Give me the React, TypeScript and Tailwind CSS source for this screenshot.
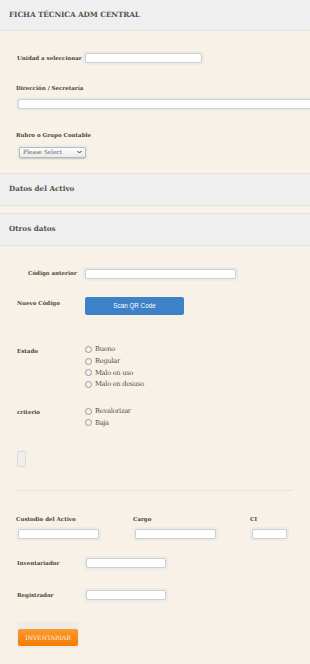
import React from "react";

const serif = "font-['DejaVu_Serif','Liberation_Serif',serif]";
const label = "whitespace-nowrap text-[5.5px] font-bold";

function TextBox({ width }: { width: number }) {
  return (
    <div className="rounded-[3px] bg-[#ecebe7] p-[2px]" style={{ width }}>
      <input
        type="text"
        className="block h-[10px] w-full rounded-[2px] border border-[#cfcfcf] bg-white outline-none"
      />
    </div>
  );
}

function Radio({ label }: { label: string }) {
  return (
    <label className="flex h-[11.7px] items-center gap-[3px]">
      <span className="h-[7px] w-[7px] shrink-0 rounded-full border border-[#9a9a9a] bg-[#f7f1e7]" />
      <span className="whitespace-nowrap text-[6.8px] tracking-[-0.35px] text-[#5b5646]">{label}</span>
    </label>
  );
}

function Band({ title }: { title: string }) {
  return (
    <div className="flex h-[33px] items-center border-y border-[#e6e2da] bg-[#efefef] px-[9px]">
      <span className="text-[7.2px] font-bold text-[#4f544c]">{title}</span>
    </div>
  );
}

export default function App() {
  return (
    <div className={`${serif} h-[664px] w-[310px] overflow-hidden bg-[#f7f1e7] text-[#4a4634]`}>
      <div className="flex h-[31px] items-center border-b border-[#e6e2da] bg-[#efefef] px-[9px]">
        <span className="text-[7.3px] font-bold tracking-[-0.1px] text-[#4f544c]">
          FICHA TÉCNICA ADM CENTRAL
        </span>
      </div>

      <div className="px-[16px]">
        <div className="mt-[20px] flex items-center">
          <span className={`w-[67px] pl-[1px] ${label}`}>Unidad a seleccionar</span>
          <TextBox width={121} />
        </div>

        <div className={`mt-[19px] ${label}`}>Dirección / Secretaría</div>
        <div className="mt-[5px] w-[320px]">
          <TextBox width={320} />
        </div>

        <div className={`mt-[20px] ${label}`}>Rubro o Grupo Contable</div>
        <div className="mt-[5px] ml-[1px] w-[71px] rounded-[3px] bg-[#ecebe7] p-[2px]">
          <div className="flex h-[11px] items-center justify-between rounded-[2px] border border-[#b9b9b9] bg-gradient-to-b from-white to-[#e9e9e9] px-[3px] shadow-[0_1px_1px_rgba(0,0,0,0.15)]">
            <span className="text-[5.8px] text-[#5f6063]">Please Select</span>
            <svg width="5" height="4" viewBox="0 0 10 8">
              <path d="M1 2l4 4 4-4" fill="none" stroke="#333" strokeWidth="2" />
            </svg>
          </div>
        </div>
      </div>

      <div className="mt-[13px]">
        <Band title="Datos del Activo" />
      </div>
      <div className="mt-[7px]">
        <Band title="Otros datos" />
      </div>

      <div className="px-[17px]">
        <div className="mt-[21px] flex items-center">
          <span className={`w-[66px] pl-[11px] ${label}`}>Código anterior</span>
          <TextBox width={155} />
        </div>

        <div className="mt-[16px] flex items-start">
          <span className={`mt-[2px] w-[68px] ${label}`}>Nuevo Código</span>
          <button
            type="button"
            className="h-[18px] w-[99px] rounded-[2px] bg-[#3d82c6] font-['Liberation_Sans',Arial,sans-serif] text-[6.3px] text-white"
          >
            Scan QR Code
          </button>
        </div>

        <div className="mt-[29px] flex items-start">
          <span className={`mt-[3px] w-[68px] ${label}`}>Estado</span>
          <div className="flex flex-col">
            <Radio label="Bueno" />
            <Radio label="Regular" />
            <Radio label="Malo en uso" />
            <Radio label="Malo en desuso" />
          </div>
        </div>

        <div className="mt-[15px] flex items-start">
          <span className={`mt-[3px] w-[68px] ${label}`}>criterio</span>
          <div className="flex flex-col">
            <Radio label="Revalorizar" />
            <Radio label="Baja" />
          </div>
        </div>

        <div className="mt-[22px] h-[16px] w-[9px] rounded-l-[2px] border border-[#dedbd5] bg-[#efefef]" />
      </div>

      <div className="mx-[16px] mt-[23px] w-[277px] border-t border-[#e9e4da]" />

      <div className="px-[16px]">
        <div className="mt-[24px] grid grid-cols-[117px_117px_1fr] gap-y-[4px]">
          <span className={label}>Custodio del Activo</span>
          <span className={label}>Cargo</span>
          <span className={label}>CI</span>
          <TextBox width={85} />
          <TextBox width={85} />
          <TextBox width={39} />
        </div>

        <div className="mt-[15px] flex items-center">
          <span className={`w-[68px] pl-[1px] ${label}`}>Inventariador</span>
          <TextBox width={84} />
        </div>

        <div className="mt-[18px] flex items-center">
          <span className={`w-[68px] pl-[1px] ${label}`}>Registrador</span>
          <TextBox width={84} />
        </div>

        <div className="mt-[20px] ml-[1px] w-fit rounded-[3px] bg-[#ecebe7] p-[1px]">
          <button
            type="button"
            className="h-[17px] w-[60px] rounded-[2px] bg-gradient-to-b from-[#fb9a2b] to-[#f57c00] text-[6px] uppercase text-[#fff3e0]"
          >
            Inventariar
          </button>
        </div>
      </div>
    </div>
  );
}
